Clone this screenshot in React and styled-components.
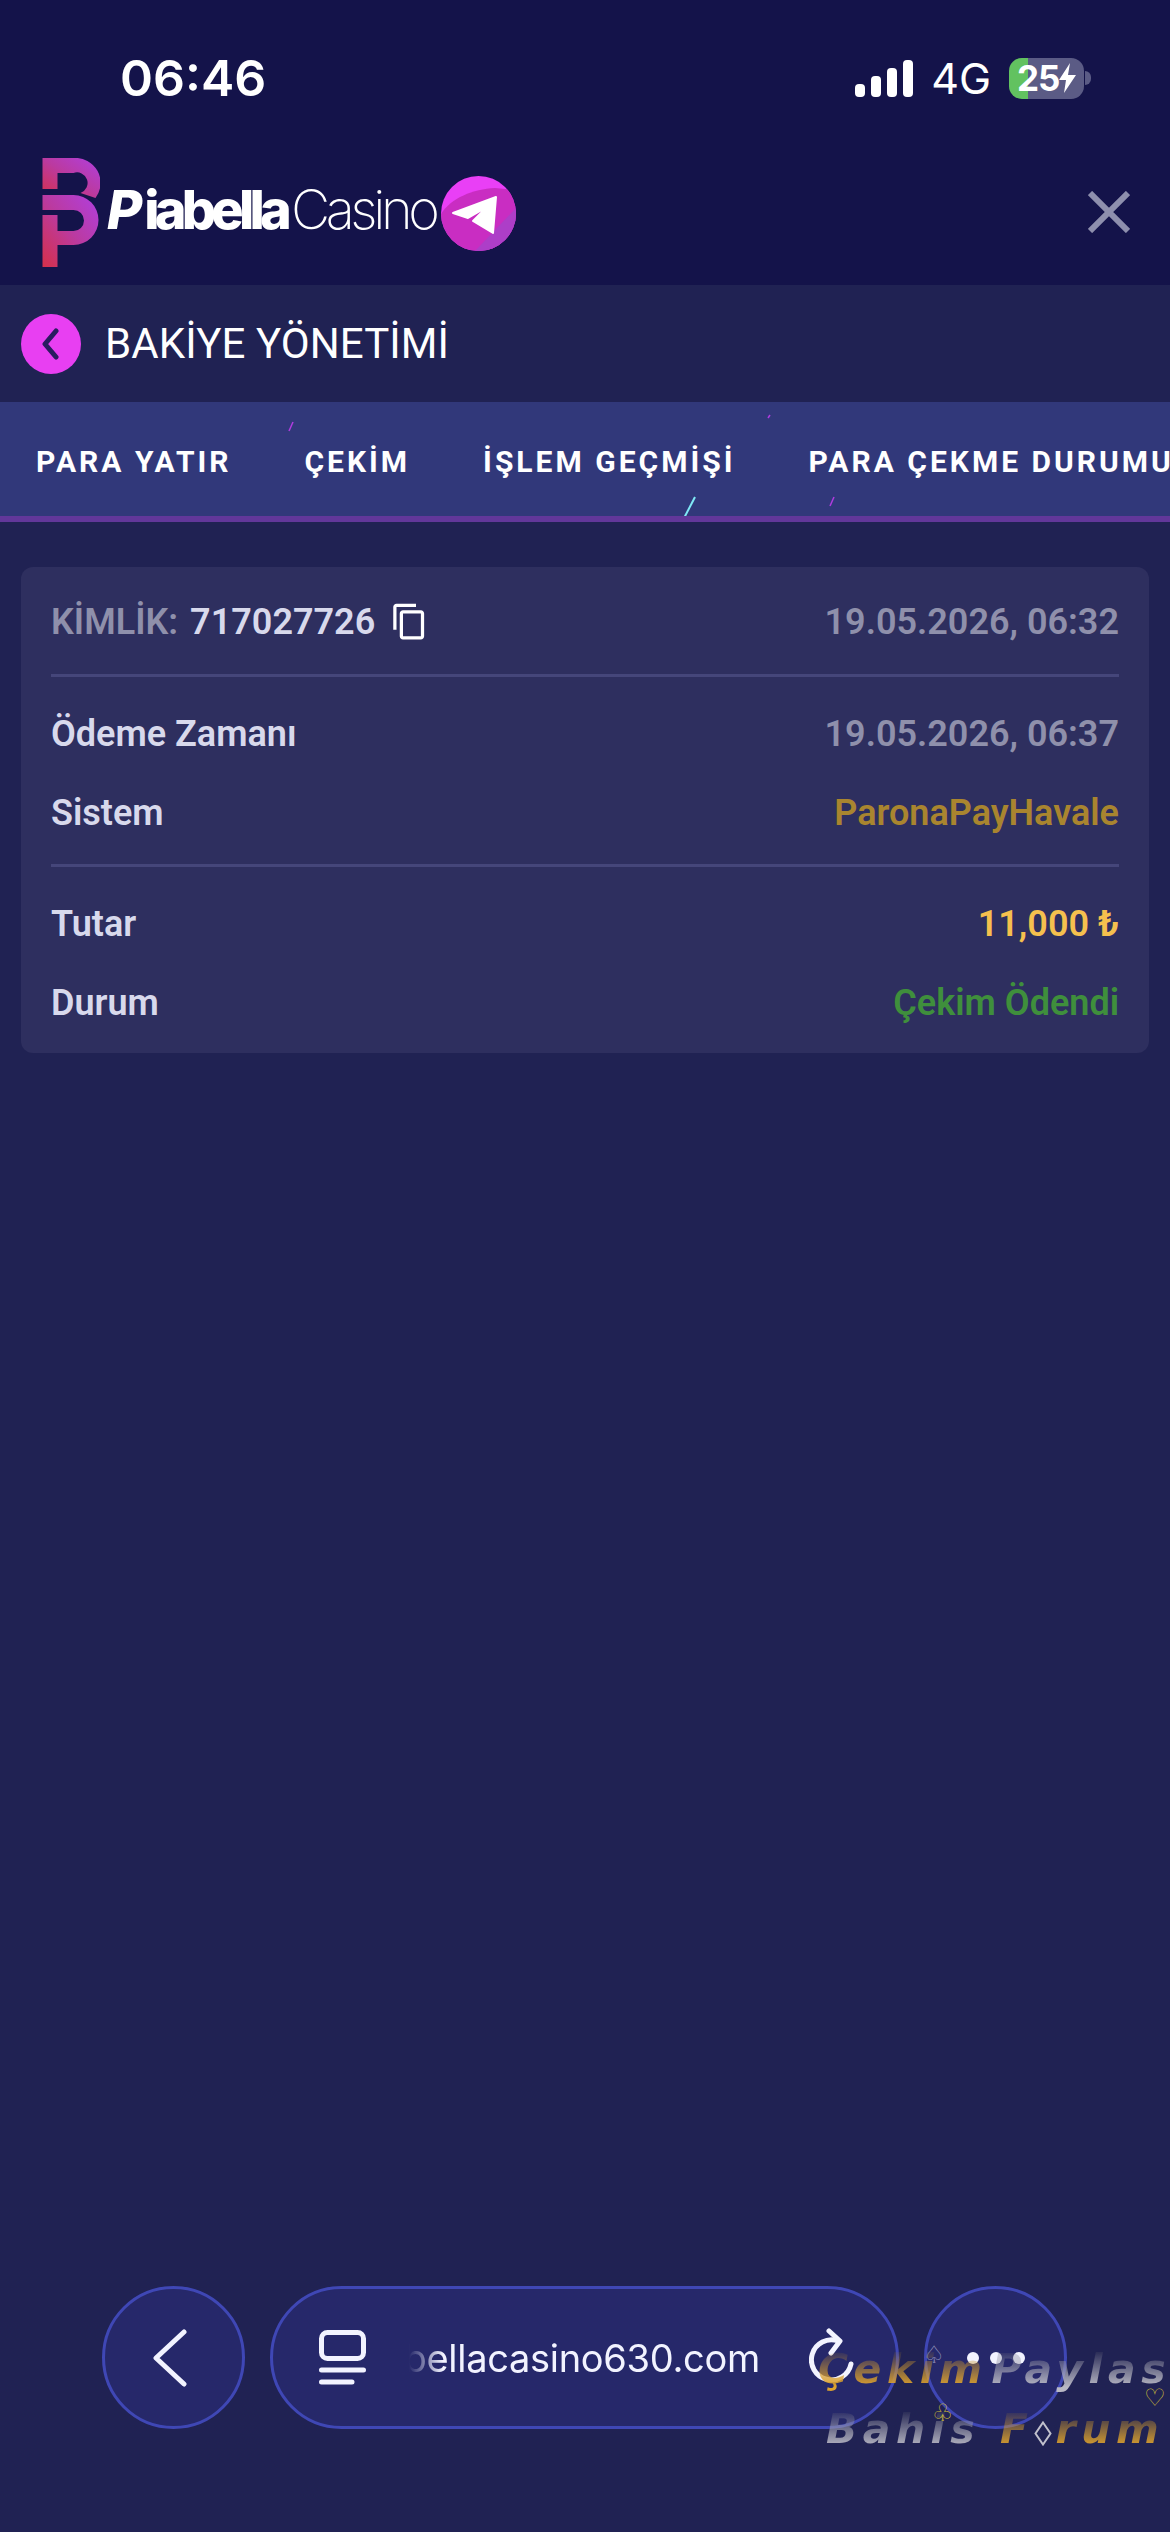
import React from 'react';
import styled, {createGlobalStyle} from 'styled-components';

const GlobalStyle = createGlobalStyle`
    html, body {
        margin: 0;
        padding: 0;
        background: #202253;
    }
    * {
        box-sizing: border-box;
    }
`;

const Page = styled.div`
    position: relative;
    width: 1170px;
    height: 2532px;
    display: flex;
    flex-direction: column;
    overflow: hidden;
    background: #202253;
    font-family: Roboto, "Liberation Sans", sans-serif;
`;

const TopArea = styled.header`
    height: 285px;
    background: #14134a;
    display: flex;
    flex-direction: column;
`;

const StatusBar = styled.div`
    height: 157px;
    padding: 50px 79px 0 120px;
    display: flex;
    justify-content: space-between;
    align-items: flex-start;
    color: #fff;
    font-family: Inter, sans-serif;
`;

const Clock = styled.span`
    font-size: 50px;
    line-height: 56px;
    font-weight: 600;
`;

const StatusIcons = styled.div`
    display: flex;
    align-items: center;
    height: 56px;
`;

const NetworkLabel = styled.span`
    font-size: 43px;
    font-weight: 400;
    margin: 0 18px 0 18px;
`;

const Battery = styled.div`
    position: relative;
    width: 75px;
    height: 41px;
    border-radius: 13px;
    overflow: hidden;
    background: linear-gradient(90deg, #62c260 0 25%, #5b5b85 25% 100%);
    display: flex;
    align-items: center;
    padding-left: 8px;
    font-size: 35px;
    font-weight: 700;
    letter-spacing: -1px;
`;

const BatteryTip = styled.span`
    width: 6px;
    height: 14px;
    margin-left: 1px;
    border-radius: 0 6px 6px 0;
    background: #5b5b85;
`;

const LogoRow = styled.div`
    flex: 1;
    padding: 0 40px 18px 42px;
    display: flex;
    align-items: center;
    justify-content: space-between;
`;

const Brand = styled.div`
    display: flex;
    align-items: center;
`;

const BrandName = styled.div`
    margin-left: 7px;
    padding-bottom: 5px;
    width: 334px;
    color: #fff;
    font-family: Inter, sans-serif;
    font-size: 54px;
    line-height: 60px;
    white-space: nowrap;
`;

const BrandInitial = styled.span`
    font-weight: 800;
    font-style: italic;
    margin-right: 2px;
`;

const BrandBold = styled.span`
    font-weight: 800;
    letter-spacing: -4.8px;
`;

const BrandLight = styled.span`
    font-weight: 200;
    letter-spacing: -4.4px;
    margin-left: 4px;
`;

const TelegramBadge = styled.svg`
    width: 75px;
    height: 75px;
    margin-top: 3px;
    flex: none;
`;

const TitleBar = styled.div`
    height: 117px;
    padding-left: 21px;
    display: flex;
    align-items: center;
    gap: 24px;
`;

const BackCircle = styled.div`
    width: 60px;
    height: 60px;
    border-radius: 50%;
    background: #e83ff2;
    display: flex;
    align-items: center;
    justify-content: center;
`;

const Title = styled.h1`
    margin: 0;
    color: #fff;
    font-size: 42px;
    font-weight: 400;
    letter-spacing: 0.1px;
    white-space: nowrap;
`;

const TabBar = styled.nav`
    position: relative;
    height: 120px;
    padding: 4px 0 0 36px;
    background: #31387a;
    border-bottom: 6px solid #62379a;
    display: flex;
    align-items: center;
    gap: 73px;
    overflow: hidden;
`;

const Tab = styled.span`
    color: #fff;
    font-size: 30px;
    font-weight: 700;
    letter-spacing: 3px;
    white-space: nowrap;
`;

const Spark = styled.svg`
    position: absolute;
    left: 0;
    top: 0;
    width: 1170px;
    height: 120px;
    pointer-events: none;
`;

const Content = styled.main`
    flex: 1;
    padding: 45px 21px 0;
`;

const Card = styled.section`
    background: #2e2f5f;
    border-radius: 12px;
    padding: 0 30px;
    height: 486px;
`;

const CardHead = styled.div`
    height: 110px;
    padding-top: 2px;
    display: flex;
    align-items: center;
    justify-content: space-between;
    border-bottom: 3px solid #45467a;
`;

const IdBlock = styled.div`
    display: flex;
    align-items: center;
`;

const Muted = styled.span`
    color: #8f90ab;
    font-size: 36px;
    font-weight: 600;
`;

const IdValue = styled.span`
    margin: 0 15px 0 12px;
    color: #d8d9ec;
    font-size: 36px;
    font-weight: 600;
`;

const CardGroup = styled.div`
    padding: 17px 0 12px;
    border-bottom: ${props => props.$last ? 'none' : '3px solid #45467a'};
`;

const Row = styled.div`
    height: 79px;
    display: flex;
    align-items: center;
    justify-content: space-between;
    font-size: 36px;
    font-weight: 600;
`;

const Label = styled.span`
    color: #d8d9ec;
`;

const Value = styled.span`
    color: ${props => props.$color || '#8f90ab'};
`;

const BrowserBar = styled.div`
    height: 246px;
    padding: 0 103px 103px 102px;
    display: flex;
    align-items: stretch;
    gap: 25px;
`;

const RoundButton = styled.div`
    width: 143px;
    height: 143px;
    flex: none;
    border-radius: 50%;
    border: 3px solid #3f47b5;
    background: #26286a;
    display: flex;
    align-items: center;
    justify-content: center;
    gap: 11px;
`;

const BackArrow = styled.svg`
    margin-right: 8px;
`;

const AddressPill = styled.div`
    flex: 1;
    height: 143px;
    border-radius: 72px;
    border: 3px solid #3f47b5;
    background: #26286a;
    display: flex;
    align-items: center;
    padding: 0 41px 0 46px;
`;

const UrlBox = styled.div`
    width: 351px;
    margin-left: 43px;
    margin-right: 49px;
    display: flex;
    justify-content: flex-end;
    overflow: hidden;
    color: #f2f3ff;
    font-family: Inter, sans-serif;
    font-size: 38px;
    letter-spacing: -0.3px;
    white-space: nowrap;
    -webkit-mask-image: linear-gradient(90deg, transparent 0, #000 34px);
    mask-image: linear-gradient(90deg, transparent 0, #000 34px);
`;

const Dot = styled.span`
    width: 12px;
    height: 12px;
    border-radius: 50%;
    background: #f2f3ff;
`;

const Watermark = styled.div`
    position: absolute;
    left: 818px;
    top: 2339px;
    font-family: "DejaVu Sans", sans-serif;
    font-style: oblique;
    font-weight: 700;
    font-size: 41px;
    line-height: 60px;
    letter-spacing: 5.5px;
    white-space: nowrap;
    pointer-events: none;
`;

const WatermarkLine = styled.div`
    display: flex;
    align-items: center;
    margin-left: ${props => props.$indent || 0}px;
`;

const Gold = styled.span`
    margin-left: ${props => props.$gap || 0}px;
    background: linear-gradient(180deg, rgba(120, 95, 50, .1) 20%, #dca22e 80%);
    -webkit-background-clip: text;
    background-clip: text;
    color: transparent;
`;

const Silver = styled.span`
    margin-left: ${props => props.$gap || 0}px;
    background: linear-gradient(180deg, rgba(70, 70, 95, .2) 20%, #b8b8c4 80%);
    -webkit-background-clip: text;
    background-clip: text;
    color: transparent;
`;

const DiamondMark = styled.svg`
    flex: none;
    margin: 8px 4px 0 0;
`;

const Suit = styled.span`
    position: absolute;
    left: ${props => props.$x}px;
    top: ${props => props.$y}px;
    color: ${props => props.$color};
    font-family: "DejaVu Sans", sans-serif;
    font-size: 24px;
    line-height: 24px;
    font-style: normal;
    font-weight: 400;
    letter-spacing: 0;
`;

const BpLogo = () => (
    <svg width="58" height="109" viewBox="0 0 57 109">
        <defs>
            <linearGradient id="bp" x1="1" y1="0" x2="0" y2="1">
                <stop offset="0" stopColor="#b03fe0"/>
                <stop offset="0.5" stopColor="#bb3aa0"/>
                <stop offset="1" stopColor="#d5304a"/>
            </linearGradient>
        </defs>
        <path fill="url(#bp)" d="M0 0H31A25 25 0 0 1 53 40L38 35A10 10 0 0 0 31 15H15V31H0Z"/>
        <path fill="url(#bp)" d="M0 37H31A25 25 0 0 1 31 87H15V109H0V57H15V73H31A10.5 10.5 0 0 0 31 52H0Z"/>
    </svg>
);

const TelegramIcon = () => (
    <TelegramBadge viewBox="0 0 75 75">
        <defs>
            <clipPath id="tgclip">
                <circle cx="37.5" cy="37.5" r="37.5"/>
            </clipPath>
        </defs>
        <g clipPath="url(#tgclip)">
            <rect width="75" height="75" fill="#e93ff6"/>
            <path d="M0 38C10 22 32 13 54 12L75 14V75H0Z" fill="#c92dc2"/>
            <path d="M75 32L34 75H75Z" fill="#ad3ec8"/>
        </g>
        <path d="M12 37L55 21L52 57L32 45L46 31L27 42Z" fill="#fff" stroke="#fff" strokeWidth="2" strokeLinejoin="round"/>
    </TelegramBadge>
);

const CopyIcon = () => (
    <svg width="39" height="39" viewBox="0 0 24 24" fill="#fff">
        <path d="M16 1H4c-1.1 0-2 .9-2 2v14h2V3h12V1zm3 4H8c-1.1 0-2 .9-2 2v14c0 1.1.9 2 2 2h11c1.1 0 2-.9 2-2V7c0-1.1-.9-2-2-2zm0 16H8V7h11v14z"/>
    </svg>
);

const App = () => {
    return (
        <Page>
            <GlobalStyle/>
            <TopArea>
                <StatusBar>
                    <Clock>06:46</Clock>
                    <StatusIcons>
                        <svg width="58" height="37" viewBox="0 0 58 37" fill="#fff">
                            <rect x="0" y="24" width="10" height="13" rx="4"/>
                            <rect x="16" y="16" width="10" height="21" rx="4"/>
                            <rect x="32" y="8" width="10" height="29" rx="4"/>
                            <rect x="48" y="0" width="10" height="37" rx="4"/>
                        </svg>
                        <NetworkLabel>4G</NetworkLabel>
                        <Battery>
                            25
                            <svg width="17" height="30" viewBox="0 0 17 30" fill="#fff">
                                <path d="M11 0L0 17H7L5 30L17 12H9Z"/>
                            </svg>
                        </Battery>
                        <BatteryTip/>
                    </StatusIcons>
                </StatusBar>
                <LogoRow>
                    <Brand>
                        <BpLogo/>
                        <BrandName>
                            <BrandInitial>P</BrandInitial>
                            <BrandBold>iabella</BrandBold>
                            <BrandLight>Casino</BrandLight>
                        </BrandName>
                        <TelegramIcon/>
                    </Brand>
                    <svg width="42" height="42" viewBox="0 0 42 42" stroke="#8e8fad" strokeWidth="6">
                        <path d="M2 2L40 40M40 2L2 40"/>
                    </svg>
                </LogoRow>
            </TopArea>

            <TitleBar>
                <BackCircle>
                    <svg width="22" height="32" viewBox="0 0 22 32" fill="none" stroke="#2a1c60" strokeWidth="5" strokeLinecap="round" strokeLinejoin="round">
                        <path d="M16 3L5 16L16 29"/>
                    </svg>
                </BackCircle>
                <Title>BAKİYE YÖNETİMİ</Title>
            </TitleBar>

            <TabBar>
                <Tab>PARA YATIR</Tab>
                <Tab>ÇEKİM</Tab>
                <Tab>İŞLEM GEÇMİŞİ</Tab>
                <Tab>PARA ÇEKME DURUMU</Tab>
                <Spark viewBox="0 0 1170 120">
                    <path d="M293 20L289 29" stroke="#b03ce0" strokeWidth="1.5"/>
                    <path d="M770 13L768 16" stroke="#b03ce0" strokeWidth="1.5"/>
                    <path d="M834 95L830 104" stroke="#b03ce0" strokeWidth="1.5"/>
                    <path d="M695 95L682 120" stroke="#7fe8f5" strokeWidth="2"/>
                </Spark>
            </TabBar>

            <Content>
                <Card>
                    <CardHead>
                        <IdBlock>
                            <Muted>KİMLİK:</Muted>
                            <IdValue>717027726</IdValue>
                            <CopyIcon/>
                        </IdBlock>
                        <Muted>19.05.2026, 06:32</Muted>
                    </CardHead>
                    <CardGroup>
                        <Row>
                            <Label>Ödeme Zamanı</Label>
                            <Value>19.05.2026, 06:37</Value>
                        </Row>
                        <Row>
                            <Label>Sistem</Label>
                            <Value $color="#a9852f">ParonaPayHavale</Value>
                        </Row>
                    </CardGroup>
                    <CardGroup $last>
                        <Row>
                            <Label>Tutar</Label>
                            <Value $color="#f5c04e">11,000 ₺</Value>
                        </Row>
                        <Row>
                            <Label>Durum</Label>
                            <Value $color="#3f8f3c">Çekim Ödendi</Value>
                        </Row>
                    </CardGroup>
                </Card>
            </Content>

            <BrowserBar>
                <RoundButton>
                    <BackArrow width="34" height="58" viewBox="0 0 34 58" fill="none" stroke="#f2f3ff" strokeWidth="5" strokeLinecap="round" strokeLinejoin="round">
                        <path d="M31 3L3 29L31 55"/>
                    </BackArrow>
                </RoundButton>
                <AddressPill>
                    <svg width="47" height="55" viewBox="0 0 47 55" fill="none" stroke="#f2f3ff" strokeWidth="5" strokeLinecap="round">
                        <rect x="2.5" y="2.5" width="42" height="26" rx="6"/>
                        <path d="M2.5 40H44.5M2.5 52H33"/>
                    </svg>
                    <UrlBox>piabellacasino630.com</UrlBox>
                    <svg width="46" height="60" viewBox="0 0 46 60" fill="none" stroke="#f2f3ff" strokeWidth="5" strokeLinecap="round" strokeLinejoin="round">
                        <path d="M29 13A20 20 0 1 0 42 36"/>
                        <path d="M20 3L31 13L22 25"/>
                    </svg>
                </AddressPill>
                <RoundButton>
                    <Dot/>
                    <Dot/>
                    <Dot/>
                </RoundButton>
            </BrowserBar>

            <Watermark>
                <WatermarkLine>
                    <Gold>Çekim</Gold><Silver $gap={4}>Paylas</Silver>
                </WatermarkLine>
                <WatermarkLine $indent={8}>
                    <Silver>Bahis</Silver>
                    <Gold $gap={20}>F</Gold>
                    <DiamondMark width="18" height="25" viewBox="0 0 18 25" fill="none" stroke="#c0c0cc" strokeWidth="2">
                        <path d="M9 1.5L16.5 12.5L9 23.5L1.5 12.5Z"/>
                    </DiamondMark>
                    <Gold>rum</Gold>
                </WatermarkLine>
                <Suit $x={105} $y={4} $color="#8f8fb8">♤</Suit>
                <Suit $x={114} $y={62} $color="#c8b83a">♧</Suit>
                <Suit $x={326} $y={47} $color="#c8b83a">♡</Suit>
            </Watermark>
        </Page>
    );
};

export default App;
